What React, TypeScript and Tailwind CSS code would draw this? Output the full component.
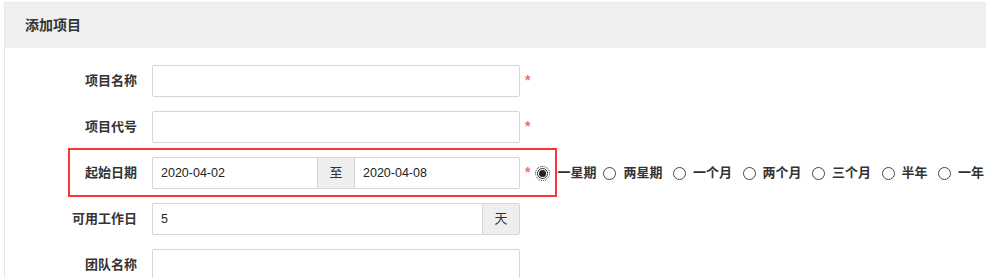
import type { ReactNode } from 'react';

const font = { fontFamily: '"Liberation Sans", "Noto Sans CJK SC", sans-serif' };

const periods = ['一星期', '两星期', '一个月', '两个月', '三个月', '半年', '一年'];

function Radio({ checked }: { checked?: boolean }) {
  if (checked) {
    return (
      <span className="flex h-[13px] w-[13px] shrink-0 items-center justify-center rounded-full outline-1 outline-dotted outline-[#333] outline-offset-0">
        <span className="flex h-[11px] w-[11px] items-center justify-center rounded-full border border-[#333] bg-white">
          <span className="h-[7px] w-[7px] rounded-full bg-[#222]" />
        </span>
      </span>
    );
  }
  return <span className="h-[13px] w-[13px] shrink-0 rounded-full border border-[#444] bg-white" />;
}

function Row({ label, children }: { label: string; children: ReactNode }) {
  return (
    <div className="flex h-[32px] items-center">
      <div className="w-[147px] shrink-0 pr-[15px] text-right text-[13px] font-bold text-[#333]">{label}</div>
      {children}
    </div>
  );
}

function Required() {
  return <span className="ml-[5px] mt-[-2px] shrink-0 text-[14px] font-bold text-[#f66]">*</span>;
}

export default function App() {
  const inputClass = 'h-[32px] rounded-[2px] border border-[#d5d5d5] bg-white px-[8px] text-[12.5px] text-[#222] flex items-center';
  const addonClass = 'flex h-[32px] w-[38px] shrink-0 items-center justify-center border border-[#d5d5d5] bg-[#eee] text-[13px] text-[#333]';

  return (
    <div className="h-[278px] w-[986px] overflow-hidden bg-white" style={font}>
      <div className="ml-[4px] mt-[2px] h-[300px] border-l border-t border-[#e8e8e8]">
        <div className="flex h-[45px] items-center bg-[#f0f0f0] pl-[20px] text-[14px] font-bold text-[#333]">
          添加项目
        </div>

        <div className="flex flex-col gap-[14px] pt-[17px]">
          <Row label="项目名称">
            <div className={`${inputClass} w-[368px] shrink-0`} />
            <Required />
          </Row>

          <Row label="项目代号">
            <div className={`${inputClass} w-[368px] shrink-0`} />
            <Required />
          </Row>

          <div className="relative">
            <Row label="起始日期">
              <div className="flex w-[368px] shrink-0">
                <div className={`${inputClass} w-[165px] rounded-r-none border-r-0`}>2020-04-02</div>
                <div className={addonClass}>至</div>
                <div className={`${inputClass} flex-1 rounded-l-none border-l-0`}>2020-04-08</div>
              </div>
              <Required />
              <div className="ml-[6px] flex shrink-0 items-center whitespace-nowrap text-[13px] font-bold text-[#333]">
                {periods.map((p, i) => (
                  <div key={p} className="flex shrink-0 items-center">
                    <Radio checked={i === 0} />
                    <span className={i === 0 ? 'ml-[8px] mr-[7px]' : 'ml-[7px] mr-[10.5px]'}>{p}</span>
                  </div>
                ))}
              </div>
            </Row>
            <div className="pointer-events-none absolute left-[63px] top-[-9px] h-[49px] w-[489px] border-2 border-[#f33]" />
          </div>

          <Row label="可用工作日">
            <div className="flex w-[368px] shrink-0">
              <div className={`${inputClass} flex-1 rounded-r-none border-r-0`}>5</div>
              <div className={`${addonClass} rounded-r-[2px]`}>天</div>
            </div>
          </Row>

          <Row label="团队名称">
            <div className={`${inputClass} w-[368px] shrink-0`} />
          </Row>
        </div>
      </div>
    </div>
  );
}
